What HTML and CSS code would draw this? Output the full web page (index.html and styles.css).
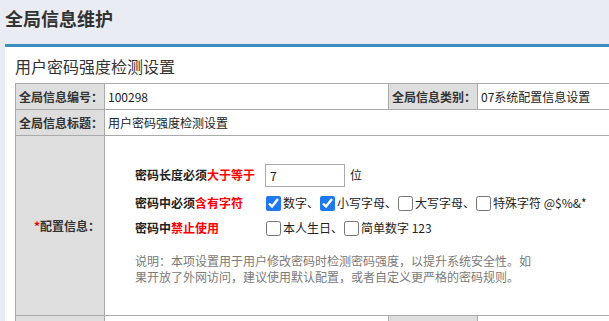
FILE: index.html
```html
<!DOCTYPE html>
<html lang="zh-CN">
<head>
<meta charset="utf-8">
<title>全局信息维护</title>
<link rel="stylesheet" href="styles.css">
</head>
<body>
<header class="page-head">全局信息维护</header>
<section class="panel">
  <h2 class="panel-title">用户密码强度检测设置</h2>
  <table class="form-table">
    <colgroup>
      <col class="c-label"><col class="c-value"><col class="c-label"><col class="c-value2">
    </colgroup>
    <tr class="r1">
      <th>全局信息编号：</th>
      <td>100298</td>
      <th>全局信息类别：</th>
      <td>07系统配置信息设置</td>
    </tr>
    <tr class="r2">
      <th>全局信息标题：</th>
      <td colspan="3">用户密码强度检测设置</td>
    </tr>
    <tr class="r3">
      <th><span class="req">*</span>配置信息：</th>
      <td colspan="3">
        <div class="cfg">
          <div class="cfg-row row-a">
            <span class="cfg-label">密码长度必须<em>大于等于</em></span>
            <input class="num" type="text" value="7">
            <span class="unit">位</span>
          </div>
          <div class="cfg-row row-b">
            <span class="cfg-label">密码中必须<em>含有字符</em></span>
            <label class="opt"><input type="checkbox" checked>数字、</label>
            <label class="opt"><input type="checkbox" checked>小写字母、</label>
            <label class="opt"><input type="checkbox">大写字母、</label>
            <label class="opt"><input type="checkbox">特殊字符 @$%&amp;*</label>
          </div>
          <div class="cfg-row row-c">
            <span class="cfg-label">密码中<em>禁止使用</em></span>
            <label class="opt"><input type="checkbox">本人生日、</label>
            <label class="opt"><input type="checkbox">简单数字 123</label>
          </div>
          <p class="note">说明：本项设置用于用户修改密码时检测密码强度，以提升系统安全性。如果开放了外网访问，建议使用默认配置，或者自定义更严格的密码规则。</p>
        </div>
      </td>
    </tr>
    <tr class="r4">
      <th></th>
      <td></td>
      <th></th>
      <td></td>
    </tr>
  </table>
</section>
</body>
</html>
```
FILE: styles.css
```css
html, body {
  margin: 0;
  padding: 0;
}
body {
  background: #e9edf3;
  font-family: "Noto Sans CJK SC", "Microsoft YaHei", sans-serif;
  color: #333;
  overflow: hidden;
  width: 609px;
  height: 321px;
}
.page-head {
  box-sizing: border-box;
  height: 44px;
  padding: 6px 0 0 5px;
  font-size: 18px;
  line-height: 24px;
  font-weight: bold;
  color: #333;
}
.panel {
  box-sizing: border-box;
  margin-left: 5px;
  background: #fff;
  border-top: 3px solid #3b8fbf;
  padding: 7px 0 0 10px;
  height: 277px;
  overflow: hidden;
}
.panel-title {
  margin: 0 0 5px 0;
  font-size: 16px;
  line-height: 24px;
  font-weight: normal;
  color: #333;
}
.form-table {
  border-collapse: collapse;
  table-layout: fixed;
  width: 622px;
  font-size: 12px;
  line-height: 16px;
}
.c-label { width: 89px; }
.c-value { width: 284px; }
.c-value2 { width: 160px; }
.form-table th,
.form-table td {
  border: 1px solid #aaa;
  padding: 0 3px;
  vertical-align: middle;
  white-space: nowrap;
}
.form-table th {
  background: #dedede;
  text-align: right;
  font-weight: bold;
  color: #333;
  padding-right: 4px;
}
.form-table td {
  color: #222;
  text-align: left;
}
.r1 th, .r1 td { height: 26px; box-sizing: border-box; }
.r2 th, .r2 td { height: 26px; box-sizing: border-box; }
.r3 th, .r3 td { height: 180px; box-sizing: border-box; }
.r4 th, .r4 td { height: 26px; box-sizing: border-box; }
.req { color: #e00; font-weight: bold; }

.r3 td { padding: 0; }
.cfg {
  padding: 26px 0 0 30px;
  height: 179px;
  box-sizing: border-box;
}
.cfg-row {
  display: flex;
  align-items: center;
}
.row-a { height: 26px; }
.row-b { height: 26px; margin-top: 2px; }
.row-c { height: 24px; }
.cfg-label {
  width: 130px;
  flex: none;
  font-weight: bold;
  color: #222;
}
.cfg-label em {
  font-style: normal;
  color: #f00;
}
.num {
  box-sizing: border-box;
  width: 80px;
  height: 23px;
  margin: 0;
  border: 1px solid #aaa;
  padding: 0 4px;
  font-family: inherit;
  font-size: 12px;
  color: #222;
  outline: none;
}
.unit { margin-left: 5px; }
.opt {
  display: flex;
  align-items: center;
  color: #222;
}
.opt input {
  width: 15px;
  height: 15px;
  margin: 0 2px 0 1px;
  accent-color: #1e78f0;
}
.note {
  margin: 13px 0 0 0;
  width: 400px;
  white-space: normal;
  color: #7a7a7a;
  font-size: 12px;
  line-height: 16px;
}
```
